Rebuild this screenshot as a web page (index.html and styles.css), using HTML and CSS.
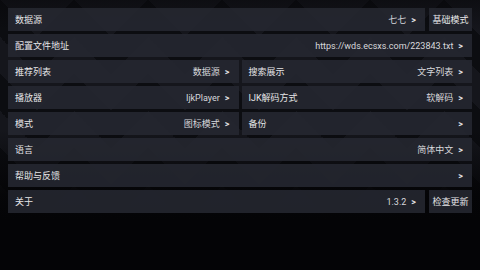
FILE: index.html
```html
<!DOCTYPE html>
<html lang="zh">
<head>
<meta charset="utf-8">
<link rel="stylesheet" href="styles.css">
</head>
<body>
<div class="bg">
  <div class="grid">
    <div class="line full">
      <div class="item grow"><span class="label">数据源</span><span class="value">七七</span><span class="chev">&gt;</span></div>
      <div class="item btn">基础模式</div>
    </div>
    <div class="line full">
      <div class="item grow"><span class="label">配置文件地址</span><span class="value">https://wds.ecsxs.com/223843.txt</span><span class="chev">&gt;</span></div>
    </div>
    <div class="item"><span class="label">推荐列表</span><span class="value">数据源</span><span class="chev">&gt;</span></div>
    <div class="item"><span class="label">搜索展示</span><span class="value">文字列表</span><span class="chev">&gt;</span></div>
    <div class="item"><span class="label">播放器</span><span class="value">IjkPlayer</span><span class="chev">&gt;</span></div>
    <div class="item"><span class="label">IJK解码方式</span><span class="value">软解码</span><span class="chev">&gt;</span></div>
    <div class="item"><span class="label">模式</span><span class="value">图标模式</span><span class="chev">&gt;</span></div>
    <div class="item"><span class="label">备份</span><span class="value"></span><span class="chev">&gt;</span></div>
    <div class="line full">
      <div class="item grow"><span class="label">语言</span><span class="value">简体中文</span><span class="chev">&gt;</span></div>
    </div>
    <div class="line full">
      <div class="item grow"><span class="label">帮助与反馈</span><span class="value"></span><span class="chev">&gt;</span></div>
    </div>
    <div class="line full">
      <div class="item grow"><span class="label">关于</span><span class="value">1.3.2</span><span class="chev">&gt;</span></div>
      <div class="item btn">检查更新</div>
    </div>
  </div>
</div>
</body>
</html>
```

FILE: styles.css
```css
html, body {
  margin: 0;
  padding: 0;
  width: 480px;
  height: 270px;
  overflow: hidden;
  background: #040406;
}
.bg {
  width: 480px;
  height: 270px;
  box-sizing: border-box;
  padding: 8px 8px 0 8px;
  background:
    linear-gradient(to bottom, rgba(6,6,9,0.5) 0, rgba(6,6,9,0) 30px, rgba(6,6,9,0) 130px, rgba(4,4,6,0.9) 195px, #040406 220px),
    linear-gradient(135deg, #15161c 25%, transparent 25%) -37px 0 / 74px 74px,
    linear-gradient(225deg, #15161c 25%, transparent 25%) -37px 0 / 74px 74px,
    linear-gradient(315deg, #15161c 25%, transparent 25%) 0 0 / 74px 74px,
    linear-gradient(45deg, #15161c 25%, transparent 25%) 0 0 / 74px 74px,
    #0c0d11;
  font-family: Roboto, "Noto Sans CJK SC", sans-serif;
  font-size: 9px;
  color: #e6e6e8;
}
.grid {
  display: grid;
  grid-template-columns: 1fr 1fr;
  column-gap: 3px;
  row-gap: 3px;
  width: 464px;
}
.full {
  grid-column: 1 / span 2;
}
.line {
  display: flex;
  gap: 4px;
}
.item {
  height: 23px;
  display: flex;
  align-items: center;
  padding: 0 9px 0 7px;
  background: rgba(38, 40, 49, 0.88);
  box-sizing: border-box;
  white-space: nowrap;
}
.grow {
  flex: 1;
}
.label {
  flex: 1;
}
.value {
  color: #d8d8dc;
  margin-right: 5px;
}
.chev {
  font-weight: bold;
  color: #e6e6e8;
}
.btn {
  width: 43px;
  padding: 0;
  justify-content: center;
}
```
